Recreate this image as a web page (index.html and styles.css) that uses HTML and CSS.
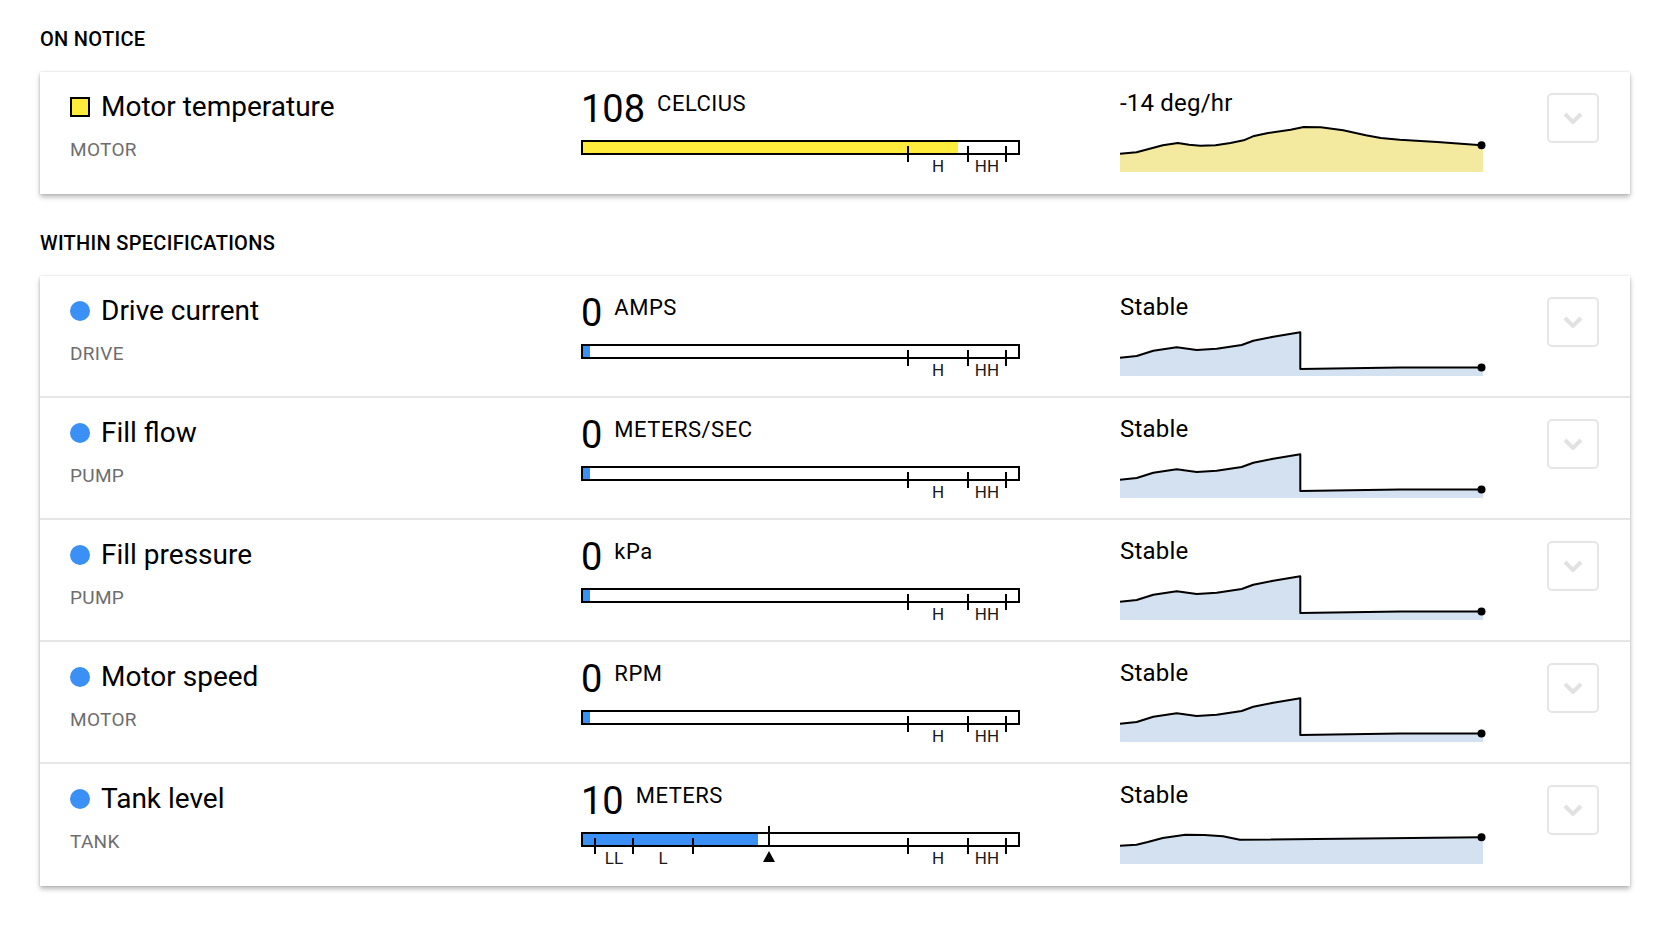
FILE: index.html
```html
<!DOCTYPE html>
<html lang="en">
<head>
<meta charset="utf-8">
<title>Status</title>
<link rel="stylesheet" href="styles.css">
</head>
<body>
<main class="page">
  <h2 class="section-title">ON NOTICE</h2>
  <section class="card">
    <div class="row">
      <div class="info">
        <div class="name"><span class="status status-notice"></span>Motor temperature</div>
        <div class="group">MOTOR</div>
      </div>
      <div class="reading">
        <div class="value"><span class="num">108</span><span class="unit">CELCIUS</span></div>
        <div class="bar">
          <div class="fill fill-notice" style="width:375px"></div>
          <span class="tick" style="left:324px"></span>
          <span class="tick" style="left:384px"></span>
          <span class="tick" style="left:422px"></span>
          <span class="lbl" style="left:355px">H</span>
          <span class="lbl" style="left:404px">HH</span>
        </div>
      </div>
      <div class="trend">
        <div class="trend-label">-14 deg/hr</div>
        <svg class="spark" viewBox="0 0 363 50" width="363" height="50">
          <path class="area-notice" d="M0,31.7 L16.5,30.3 L29.7,26.7 L42.8,23.3 L57.9,21 L69.1,22.7 L80.4,23.7 L95.5,23.3 L110.5,21 L123.6,18.3 L133,14.3 L148.1,11 L170.6,7.7 L183.8,5 L200.7,5.3 L223.2,8.3 L245.8,13.3 L260.8,16 L279.6,17.7 L317.2,20 L361.5,23.3 L363,23.3 L363,50 L0,50 Z"/>
          <path class="line" d="M0,31.7 L16.5,30.3 L29.7,26.7 L42.8,23.3 L57.9,21 L69.1,22.7 L80.4,23.7 L95.5,23.3 L110.5,21 L123.6,18.3 L133,14.3 L148.1,11 L170.6,7.7 L183.8,5 L200.7,5.3 L223.2,8.3 L245.8,13.3 L260.8,16 L279.6,17.7 L317.2,20 L361.5,23.3"/>
          <circle cx="361.5" cy="23.3" r="4"/>
        </svg>
      </div>
      <button class="expand" type="button" aria-label="Expand"><svg width="20" height="12" viewBox="0 0 20 12"><polyline points="2,2 10,10 18,2"/></svg></button>
    </div>
  </section>

  <h2 class="section-title">WITHIN SPECIFICATIONS</h2>
  <section class="card">
    <div class="row">
      <div class="info">
        <div class="name"><span class="status status-ok"></span>Drive current</div>
        <div class="group">DRIVE</div>
      </div>
      <div class="reading">
        <div class="value"><span class="num">0</span><span class="unit">AMPS</span></div>
        <div class="bar">
          <div class="fill fill-ok" style="width:7px"></div>
          <span class="tick" style="left:324px"></span>
          <span class="tick" style="left:384px"></span>
          <span class="tick" style="left:422px"></span>
          <span class="lbl" style="left:355px">H</span>
          <span class="lbl" style="left:404px">HH</span>
        </div>
      </div>
      <div class="trend">
        <div class="trend-label">Stable</div>
        <svg class="spark" viewBox="0 0 363 50" width="363" height="50">
          <path class="area-ok" d="M0,31.7 L16.7,30 L33.3,24.7 L56.7,21.3 L76.7,24 L96.7,22.7 L121.7,19 L133.3,14.7 L153.3,10.7 L180.3,6.3 L180.3,43 L280,41.5 L363,41.5 L363,50 L0,50 Z"/>
          <path class="line" d="M0,31.7 L16.7,30 L33.3,24.7 L56.7,21.3 L76.7,24 L96.7,22.7 L121.7,19 L133.3,14.7 L153.3,10.7 L180.3,6.3 L180.3,43 L280,41.5 L361.5,41.5"/>
          <circle cx="361.5" cy="41.5" r="4"/>
        </svg>
      </div>
      <button class="expand" type="button" aria-label="Expand"><svg width="20" height="12" viewBox="0 0 20 12"><polyline points="2,2 10,10 18,2"/></svg></button>
    </div>

    <div class="row">
      <div class="info">
        <div class="name"><span class="status status-ok"></span>Fill flow</div>
        <div class="group">PUMP</div>
      </div>
      <div class="reading">
        <div class="value"><span class="num">0</span><span class="unit">METERS/SEC</span></div>
        <div class="bar">
          <div class="fill fill-ok" style="width:7px"></div>
          <span class="tick" style="left:324px"></span>
          <span class="tick" style="left:384px"></span>
          <span class="tick" style="left:422px"></span>
          <span class="lbl" style="left:355px">H</span>
          <span class="lbl" style="left:404px">HH</span>
        </div>
      </div>
      <div class="trend">
        <div class="trend-label">Stable</div>
        <svg class="spark" viewBox="0 0 363 50" width="363" height="50">
          <path class="area-ok" d="M0,31.7 L16.7,30 L33.3,24.7 L56.7,21.3 L76.7,24 L96.7,22.7 L121.7,19 L133.3,14.7 L153.3,10.7 L180.3,6.3 L180.3,43 L280,41.5 L363,41.5 L363,50 L0,50 Z"/>
          <path class="line" d="M0,31.7 L16.7,30 L33.3,24.7 L56.7,21.3 L76.7,24 L96.7,22.7 L121.7,19 L133.3,14.7 L153.3,10.7 L180.3,6.3 L180.3,43 L280,41.5 L361.5,41.5"/>
          <circle cx="361.5" cy="41.5" r="4"/>
        </svg>
      </div>
      <button class="expand" type="button" aria-label="Expand"><svg width="20" height="12" viewBox="0 0 20 12"><polyline points="2,2 10,10 18,2"/></svg></button>
    </div>

    <div class="row">
      <div class="info">
        <div class="name"><span class="status status-ok"></span>Fill pressure</div>
        <div class="group">PUMP</div>
      </div>
      <div class="reading">
        <div class="value"><span class="num">0</span><span class="unit">kPa</span></div>
        <div class="bar">
          <div class="fill fill-ok" style="width:7px"></div>
          <span class="tick" style="left:324px"></span>
          <span class="tick" style="left:384px"></span>
          <span class="tick" style="left:422px"></span>
          <span class="lbl" style="left:355px">H</span>
          <span class="lbl" style="left:404px">HH</span>
        </div>
      </div>
      <div class="trend">
        <div class="trend-label">Stable</div>
        <svg class="spark" viewBox="0 0 363 50" width="363" height="50">
          <path class="area-ok" d="M0,31.7 L16.7,30 L33.3,24.7 L56.7,21.3 L76.7,24 L96.7,22.7 L121.7,19 L133.3,14.7 L153.3,10.7 L180.3,6.3 L180.3,43 L280,41.5 L363,41.5 L363,50 L0,50 Z"/>
          <path class="line" d="M0,31.7 L16.7,30 L33.3,24.7 L56.7,21.3 L76.7,24 L96.7,22.7 L121.7,19 L133.3,14.7 L153.3,10.7 L180.3,6.3 L180.3,43 L280,41.5 L361.5,41.5"/>
          <circle cx="361.5" cy="41.5" r="4"/>
        </svg>
      </div>
      <button class="expand" type="button" aria-label="Expand"><svg width="20" height="12" viewBox="0 0 20 12"><polyline points="2,2 10,10 18,2"/></svg></button>
    </div>

    <div class="row">
      <div class="info">
        <div class="name"><span class="status status-ok"></span>Motor speed</div>
        <div class="group">MOTOR</div>
      </div>
      <div class="reading">
        <div class="value"><span class="num">0</span><span class="unit">RPM</span></div>
        <div class="bar">
          <div class="fill fill-ok" style="width:7px"></div>
          <span class="tick" style="left:324px"></span>
          <span class="tick" style="left:384px"></span>
          <span class="tick" style="left:422px"></span>
          <span class="lbl" style="left:355px">H</span>
          <span class="lbl" style="left:404px">HH</span>
        </div>
      </div>
      <div class="trend">
        <div class="trend-label">Stable</div>
        <svg class="spark" viewBox="0 0 363 50" width="363" height="50">
          <path class="area-ok" d="M0,31.7 L16.7,30 L33.3,24.7 L56.7,21.3 L76.7,24 L96.7,22.7 L121.7,19 L133.3,14.7 L153.3,10.7 L180.3,6.3 L180.3,43 L280,41.5 L363,41.5 L363,50 L0,50 Z"/>
          <path class="line" d="M0,31.7 L16.7,30 L33.3,24.7 L56.7,21.3 L76.7,24 L96.7,22.7 L121.7,19 L133.3,14.7 L153.3,10.7 L180.3,6.3 L180.3,43 L280,41.5 L361.5,41.5"/>
          <circle cx="361.5" cy="41.5" r="4"/>
        </svg>
      </div>
      <button class="expand" type="button" aria-label="Expand"><svg width="20" height="12" viewBox="0 0 20 12"><polyline points="2,2 10,10 18,2"/></svg></button>
    </div>

    <div class="row">
      <div class="info">
        <div class="name"><span class="status status-ok"></span>Tank level</div>
        <div class="group">TANK</div>
      </div>
      <div class="reading">
        <div class="value"><span class="num">10</span><span class="unit">METERS</span></div>
        <div class="bar">
          <div class="fill fill-ok" style="width:175px"></div>
          <span class="tick" style="left:11px"></span>
          <span class="tick" style="left:49px"></span>
          <span class="tick" style="left:109px"></span>
          <span class="tick" style="left:324px"></span>
          <span class="tick" style="left:384px"></span>
          <span class="tick" style="left:422px"></span>
          <span class="lbl" style="left:31px">LL</span>
          <span class="lbl" style="left:80px">L</span>
          <span class="lbl" style="left:355px">H</span>
          <span class="lbl" style="left:404px">HH</span>
          <span class="marker" style="left:185px"></span>
          <span class="pointer" style="left:186px"></span>
        </div>
      </div>
      <div class="trend">
        <div class="trend-label">Stable</div>
        <svg class="spark" viewBox="0 0 363 50" width="363" height="50">
          <path class="area-ok" d="M0,31.7 L16.5,30.7 L27.8,28 L42.8,24 L65.4,20.7 L84.2,21 L103,22.3 L119.9,25.7 L361.5,23.3 L363,23.3 L363,50 L0,50 Z"/>
          <path class="line" d="M0,31.7 L16.5,30.7 L27.8,28 L42.8,24 L65.4,20.7 L84.2,21 L103,22.3 L119.9,25.7 L361.5,23.3"/>
          <circle cx="361.5" cy="23.3" r="4"/>
        </svg>
      </div>
      <button class="expand" type="button" aria-label="Expand"><svg width="20" height="12" viewBox="0 0 20 12"><polyline points="2,2 10,10 18,2"/></svg></button>
    </div>
  </section>
</main>
</body>
</html>
```

FILE: styles.css
```css
* { box-sizing: border-box; }

html, body {
  margin: 0;
  background: #ffffff;
}

body {
  font-family: Roboto, "Liberation Sans", sans-serif;
  color: #000000;
}

.page {
  padding: 27px 40px 40px;
}

.section-title {
  margin: 0;
  font-size: 20px;
  line-height: 24px;
  font-weight: 500;
  letter-spacing: 0.3px;
}

.card {
  margin: 21px 0 37px;
  background: #ffffff;
  box-shadow: 0 3px 5px rgba(0, 0, 0, 0.28), 0 0 2px rgba(0, 0, 0, 0.14);
}

.row {
  display: grid;
  grid-template-columns: 511px 539px 1fr 52px;
  align-items: start;
  height: 122px;
  padding: 0 31px 0 30px;
  border-bottom: 2px solid #e6e6e6;
}

.row:last-child {
  border-bottom-color: #ffffff;
}

/* left column */
.info {
  padding-top: 19px;
}

.name {
  display: flex;
  align-items: center;
  font-size: 28px;
  line-height: 32px;
}

.status {
  flex: none;
  width: 20px;
  height: 20px;
  margin-right: 11px;
}

.status-notice {
  background: #ffeb3b;
  border: 2px solid #000000;
}

.status-ok {
  background: #3a90f4;
  border-radius: 50%;
}

.group {
  margin-top: 16px;
  font-size: 19px;
  line-height: 22px;
  color: #6e6e6e;
  letter-spacing: 0.3px;
}

/* middle column */
.reading {
  padding-top: 17px;
}

.value {
  display: flex;
  align-items: flex-start;
  height: 40px;
}

.num {
  font-size: 38px;
  line-height: 40px;
}

.unit {
  margin: 3px 0 0 12px;
  font-size: 22px;
  line-height: 24px;
  letter-spacing: 0.5px;
}

.bar {
  position: relative;
  width: 439px;
  height: 15px;
  margin-top: 11px;
  border: 2px solid #000000;
}

.fill {
  position: absolute;
  left: 0;
  top: 0;
  bottom: 0;
}

.fill-notice { background: #ffeb3b; }
.fill-ok { background: #3a90f4; }

.tick {
  position: absolute;
  top: 4px;
  width: 2px;
  height: 16px;
  background: #000000;
}

.lbl {
  position: absolute;
  top: 16px;
  transform: translateX(-50%);
  font-size: 17px;
  line-height: 16px;
  color: #1a1a1a;
}

.marker {
  position: absolute;
  top: -8px;
  width: 2px;
  height: 21px;
  background: #000000;
}

.pointer {
  position: absolute;
  top: 17px;
  width: 0;
  height: 0;
  transform: translateX(-50%);
  border-left: 6px solid transparent;
  border-right: 6px solid transparent;
  border-bottom: 11px solid #000000;
}

/* trend column */
.trend {
  padding-top: 17px;
}

.trend-label {
  font-size: 24px;
  line-height: 28px;
  letter-spacing: 0.2px;
}

.spark {
  display: block;
  margin-top: 5px;
  overflow: visible;
}

.spark .line {
  fill: none;
  stroke: #000000;
  stroke-width: 2;
  stroke-linejoin: round;
}

.spark circle { fill: #000000; }
.area-notice { fill: #f3ea9f; }
.area-ok { fill: #d3e1f1; }

/* expand button */
.expand {
  margin-top: 21px;
  width: 52px;
  height: 50px;
  padding: 0;
  display: flex;
  align-items: center;
  justify-content: center;
  background: #ffffff;
  border: 2px solid #e6e6e6;
  border-radius: 5px;
}

.expand polyline {
  fill: none;
  stroke: #e2e2e2;
  stroke-width: 4;
}
```
